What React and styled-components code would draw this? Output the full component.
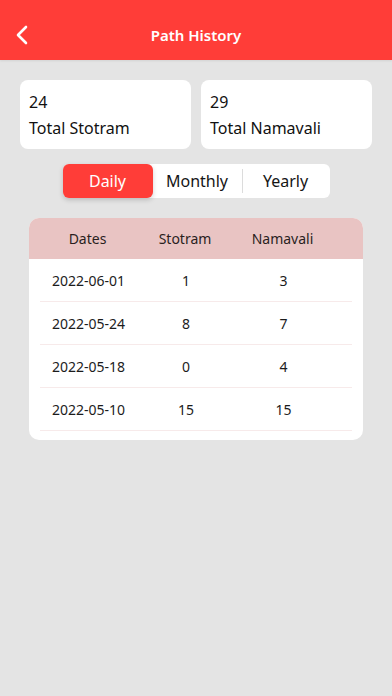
import React, { useState } from 'react'
import styled, { createGlobalStyle } from 'styled-components'

const GlobalStyle = createGlobalStyle`
  html, body {
    margin: 0;
    padding: 0;
    background: #e4e4e4;
    font-family: "Noto Sans", "Open Sans", sans-serif;
  }
`

const Screen = styled.div`
  width: 392px;
  min-height: 696px;
  background: #e4e4e4;
`

const TopBar = styled.header`
  height: 60px;
  padding-top: 10px;
  box-sizing: border-box;
  background: #ff3d38;
  display: flex;
  align-items: center;
  justify-content: center;
  position: relative;
  box-shadow: 0 1px 2px rgba(0, 0, 0, 0.08);
`

const BackButton = styled.button`
  position: absolute;
  left: 10px;
  top: 23px;
  width: 24px;
  height: 24px;
  padding: 0;
  border: 0;
  background: none;
  display: flex;
  align-items: center;
  justify-content: center;
`

const Title = styled.h1`
  margin: 0;
  color: #fff;
  font-size: 15px;
  font-weight: 600;
`

const Content = styled.main`
  padding: 20px 20px 0;
  display: flex;
  flex-direction: column;
  align-items: center;
`

const Stats = styled.div`
  width: 100%;
  display: grid;
  grid-template-columns: 1fr 1fr;
  gap: 10px;
`

const StatCard = styled.div`
  background: #fff;
  border-radius: 8px;
  height: 69px;
  padding: 9px 9px 0;
  box-sizing: border-box;
  color: #111;
  font-size: 16px;
  line-height: 26px;
`

const Segments = styled.div`
  margin-top: 15px;
  width: 267px;
  height: 34px;
  background: #fff;
  border-radius: 6px;
  display: grid;
  grid-template-columns: 90px 89px 88px;
`

const Segment = styled.button`
  border: 0;
  padding: 0;
  font-family: inherit;
  font-size: 16px;
  border-radius: 6px;
  position: relative;
  color: ${(p) => (p.$active ? '#fff' : '#151515')};
  background: ${(p) => (p.$active ? '#ff3d38' : 'transparent')};
  box-shadow: ${(p) => (p.$active ? '0 2px 5px rgba(0, 0, 0, 0.18)' : 'none')};

  &::before {
    content: '';
    position: absolute;
    left: 0;
    top: 5px;
    bottom: 5px;
    width: 1px;
    background: ${(p) => (p.$divider ? '#dcdcdc' : 'transparent')};
  }
`

const TableCard = styled.div`
  margin-top: 20px;
  width: 334px;
  margin-left: 9px;
  background: #fff;
  border-radius: 10px;
  overflow: hidden;
  padding-bottom: 9px;
  align-self: flex-start;
  box-sizing: border-box;
`

const Columns = `
  display: grid;
  grid-template-columns: 97px 98px 97px;
  align-items: center;
  text-align: center;
`

const HeadRow = styled.div`
  ${Columns}
  height: 41px;
  padding-left: 10px;
  background: #e9c4c3;
  color: #2a1e1e;
  font-size: 14px;
`

const Row = styled.div`
  ${Columns}
  height: 42px;
  margin: 0 11px;
  border-bottom: 1px solid #f7eaea;
  color: #1c1c1c;
  font-size: 14px;
`

const rows = [
  ['2022-06-01', 1, 3],
  ['2022-05-24', 8, 7],
  ['2022-05-18', 0, 4],
  ['2022-05-10', 15, 15],
]

export default function App () {
  const [tab, setTab] = useState('Daily')
  const tabs = ['Daily', 'Monthly', 'Yearly']

  return (
    <Screen>
      <GlobalStyle />
      <TopBar>
        <BackButton aria-label='Back'>
          <svg width='14' height='20' viewBox='0 0 14 20'>
            <path d='M11 2 L3 10 L11 18' fill='none' stroke='#fff' strokeWidth='2.6' strokeLinecap='round' strokeLinejoin='round' />
          </svg>
        </BackButton>
        <Title>Path History</Title>
      </TopBar>

      <Content>
        <Stats>
          <StatCard>24<br />Total Stotram</StatCard>
          <StatCard>29<br />Total Namavali</StatCard>
        </Stats>

        <Segments>
          {tabs.map((t, i) => (
            <Segment
              key={t}
              $active={tab === t}
              $divider={i > 0 && tab !== t && tab !== tabs[i - 1]}
              onClick={() => setTab(t)}
            >
              {t}
            </Segment>
          ))}
        </Segments>

        <TableCard>
          <HeadRow>
            <span>Dates</span>
            <span>Stotram</span>
            <span>Namavali</span>
          </HeadRow>
          {rows.map(([date, s, n]) => (
            <Row key={date}>
              <span>{date}</span>
              <span>{s}</span>
              <span>{n}</span>
            </Row>
          ))}
        </TableCard>
      </Content>
    </Screen>
  )
}
